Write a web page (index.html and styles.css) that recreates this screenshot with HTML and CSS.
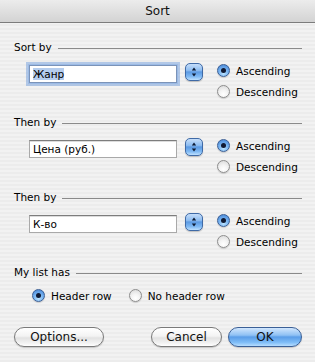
FILE: index.html
```html
<!DOCTYPE html>
<html>
<head>
<meta charset="utf-8">
<title>Sort</title>
<link rel="stylesheet" href="styles.css">
</head>
<body>
<div class="window">
  <div class="titlebar">Sort</div>
  <div class="content">
    <section class="group">
      <div class="group-head"><span class="label">Sort by</span><span class="rule"></span></div>
      <div class="group-body">
        <div class="picker">
          <div class="field focused"><span class="sel">Жанр</span></div>
          <div class="stepper"><svg viewBox="0 0 18 18" width="18" height="18"><polygon points="9,4.5 6.8,7.6 11.2,7.6"/><polygon points="9,13.5 6.8,10.4 11.2,10.4"/></svg></div>
        </div>
        <div class="radios">
          <div class="radio on"><span class="dot"></span>Ascending</div>
          <div class="radio"><span class="dot"></span>Descending</div>
        </div>
      </div>
    </section>
    <section class="group">
      <div class="group-head"><span class="label">Then by</span><span class="rule"></span></div>
      <div class="group-body">
        <div class="picker">
          <div class="field">Цена (руб.)</div>
          <div class="stepper"><svg viewBox="0 0 18 18" width="18" height="18"><polygon points="9,4.5 6.8,7.6 11.2,7.6"/><polygon points="9,13.5 6.8,10.4 11.2,10.4"/></svg></div>
        </div>
        <div class="radios">
          <div class="radio on"><span class="dot"></span>Ascending</div>
          <div class="radio"><span class="dot"></span>Descending</div>
        </div>
      </div>
    </section>
    <section class="group">
      <div class="group-head"><span class="label">Then by</span><span class="rule"></span></div>
      <div class="group-body">
        <div class="picker">
          <div class="field">К-во</div>
          <div class="stepper"><svg viewBox="0 0 18 18" width="18" height="18"><polygon points="9,4.5 6.8,7.6 11.2,7.6"/><polygon points="9,13.5 6.8,10.4 11.2,10.4"/></svg></div>
        </div>
        <div class="radios">
          <div class="radio on"><span class="dot"></span>Ascending</div>
          <div class="radio"><span class="dot"></span>Descending</div>
        </div>
      </div>
    </section>
    <section class="group last">
      <div class="group-head"><span class="label">My list has</span><span class="rule"></span></div>
      <div class="group-body row">
        <div class="radio on"><span class="dot"></span>Header row</div>
        <div class="radio"><span class="dot"></span>No header row</div>
      </div>
    </section>
    <div class="buttons">
      <div class="btn options">Options...</div>
      <div class="spacer"></div>
      <div class="btn cancel">Cancel</div>
      <div class="btn ok">OK</div>
    </div>
  </div>
</div>
</body>
</html>
```

FILE: styles.css
```css
html, body {
  margin: 0;
  padding: 0;
}
body {
  width: 315px;
  height: 362px;
  overflow: hidden;
  font-family: "DejaVu Sans", "Noto Sans", sans-serif;
  font-size: 10.5px;
  color: #000;
}
.window {
  width: 315px;
  height: 362px;
  display: flex;
  flex-direction: column;
  background: repeating-linear-gradient(to bottom, #ececec 0, #ececec 2px, #f2f2f2 2px, #f2f2f2 4px);
}
.titlebar {
  height: 22px;
  flex: none;
  border-bottom: 1px solid #7c7c7c;
  background: linear-gradient(to bottom, #ececec, #d3d3d3);
  display: flex;
  align-items: center;
  justify-content: center;
  font-size: 12px;
  color: #111;
}
.content {
  padding: 17px 13px 0 14px;
  display: flex;
  flex-direction: column;
}
.group {
  height: 75px;
  display: flex;
  flex-direction: column;
}
.group.last {
  height: 41px;
}
.group-head {
  height: 14px;
  display: flex;
  align-items: center;
  gap: 6px;
}
.rule {
  flex: 1;
  height: 1px;
  background: #8a8a8a;
  margin-top: 3px;
}
.group-body {
  display: flex;
  padding-left: 15px;
  padding-top: 6px;
}
.group-body.row {
  padding-left: 18px;
  gap: 17px;
}
.picker {
  display: flex;
  align-items: flex-start;
  gap: 8px;
  margin-top: 3px;
}
.field {
  box-sizing: border-box;
  width: 148px;
  height: 18px;
  margin-top: 2px;
  background: #fff;
  border: 1px solid #a9a9a9;
  border-top-color: #7d7d7d;
  box-shadow: inset 0 1px 0 #dcdcdc;
  padding: 0 3px;
  display: flex;
  align-items: center;
  white-space: nowrap;
}
.field.focused {
  border-color: #7b93b8;
  box-shadow: 0 0 0 1px #9cbbe6, 0 0 0 3px rgba(126, 166, 222, 0.55);
}
.sel {
  background: #b5cdee;
}
.stepper {
  width: 18px;
  height: 18px;
  box-sizing: border-box;
  border: 1px solid #3f6aa6;
  border-radius: 5px;
  background: linear-gradient(to bottom, #c6defa 0%, #8dbcf0 40%, #5b99e2 50%, #82bbf4 80%, #bfe1ff 100%);
  box-shadow: 0 1px 1px rgba(0,0,0,0.2);
  overflow: hidden;
}
.stepper svg {
  display: block;
  margin: -1px;
}
.stepper polygon {
  fill: #0d1a33;
}
.radios {
  display: flex;
  flex-direction: column;
  margin-left: 14px;
}
.radio {
  height: 21px;
  display: flex;
  align-items: center;
  gap: 6px;
  white-space: nowrap;
}
.dot {
  width: 13px;
  height: 13px;
  box-sizing: border-box;
  border-radius: 50%;
  border: 1px solid #8d8d8d;
  background: radial-gradient(circle at 50% 75%, #ffffff 0, #f4f4f4 40%, #d6d6d6 100%);
  box-shadow: 0 1px 1px rgba(0,0,0,0.15);
  position: relative;
  flex: none;
}
.radio.on .dot {
  border-color: #3b5f95;
  background: radial-gradient(circle at 50% 78%, #b9e2ff 0, #78b4f1 45%, #3f7fd2 100%);
}
.radio.on .dot::after {
  content: "";
  position: absolute;
  left: 50%;
  top: 50%;
  width: 5px;
  height: 5px;
  margin: -2.5px 0 0 -2.5px;
  border-radius: 50%;
  background: #101a33;
}
.buttons {
  display: flex;
  margin-top: 21px;
}
.spacer {
  flex: 1;
}
.btn {
  box-sizing: border-box;
  height: 20px;
  border-radius: 10px;
  border: 1px solid #7a7a7a;
  background: linear-gradient(to bottom, #ffffff 0%, #f3f3f3 45%, #e2e2e2 55%, #f3f3f3 85%, #ffffff 100%);
  box-shadow: 0 1px 1px rgba(0,0,0,0.18);
  display: flex;
  align-items: center;
  justify-content: center;
  font-size: 12px;
  color: #111;
}
.options {
  width: 90px;
}
.cancel {
  width: 71px;
  margin-right: 6px;
}
.ok {
  width: 74px;
  border-color: #3a5f96;
  background: linear-gradient(to bottom, #d1e6fd 0%, #8fc1f4 40%, #5a9de8 50%, #7fbdf7 80%, #b6ddff 100%);
}
```
